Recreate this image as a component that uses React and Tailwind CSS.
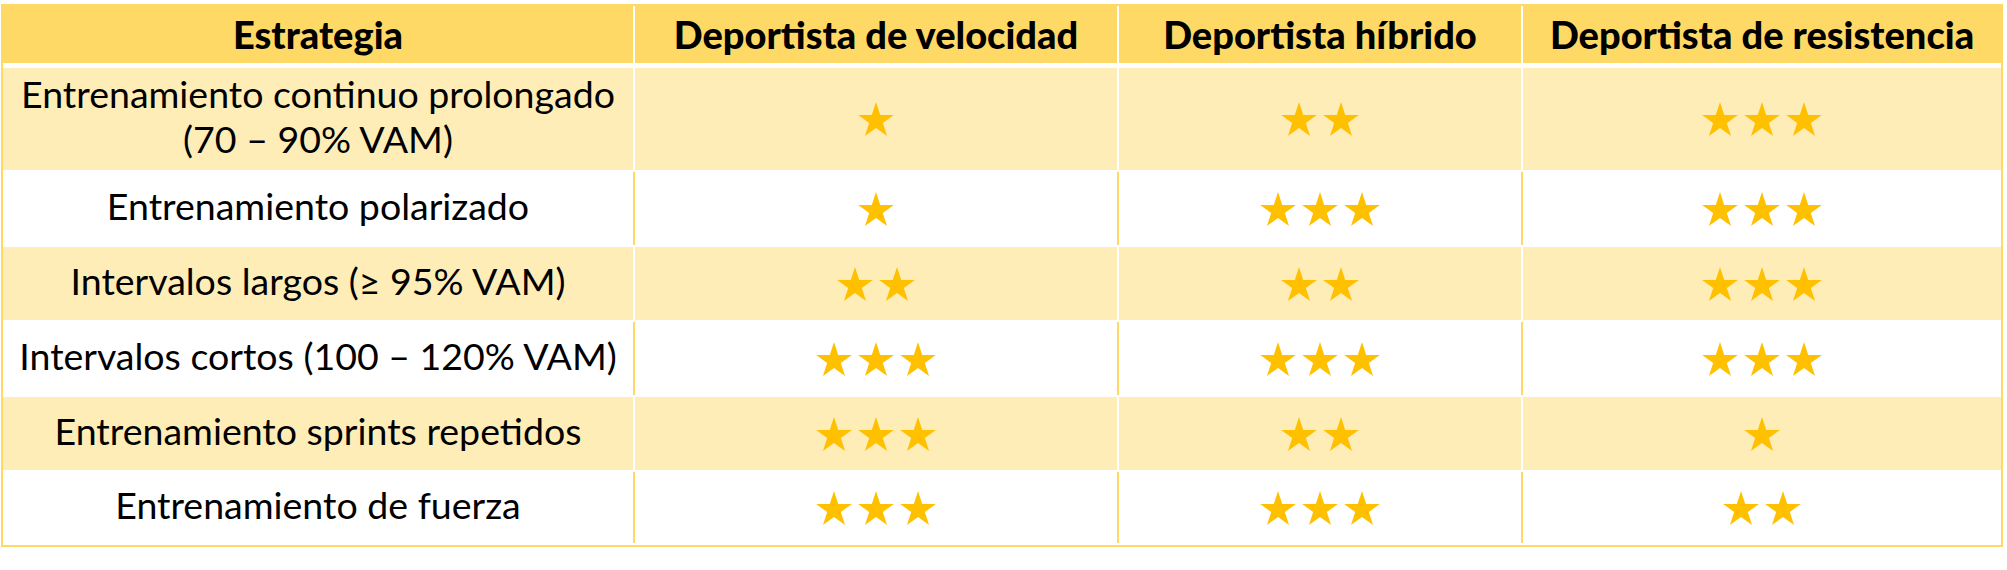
import React from 'react';

const HEADERS = ['Estrategia', 'Deportista de velocidad', 'Deportista híbrido', 'Deportista de resistencia'];

const COLS = ['w-[630px]', 'w-[482px]', 'w-[402px]', 'w-[478px]'];

const ROWS = [
  { label: ['Entrenamiento continuo prolongado', '(70 – 90% VAM)'], stars: [1, 2, 3], h: 'h-[102px]', shaded: true },
  { label: ['Entrenamiento polarizado'], stars: [1, 3, 3], h: 'h-[77px]', shaded: false },
  { label: ['Intervalos largos (≥ 95% VAM)'], stars: [2, 2, 3], h: 'h-[73px]', shaded: true },
  { label: ['Intervalos cortos (100 – 120% VAM)'], stars: [3, 3, 3], h: 'h-[77px]', shaded: false },
  { label: ['Entrenamiento sprints repetidos'], stars: [3, 2, 1], h: 'h-[73px]', shaded: true },
  { label: ['Entrenamiento de fuerza'], stars: [3, 3, 2], h: 'h-[75px]', shaded: false },
];

function Star() {
  return (
    <svg width="36" height="34" viewBox="2.45 0 95.1 90.45" className="shrink-0">
      <polygon
        fill="#ffc000"
        points="50,0 61.23,34.55 97.55,34.55 68.17,55.9 79.39,90.45 50,69.1 20.61,90.45 31.83,55.9 2.45,34.55 38.77,34.55"
      />
    </svg>
  );
}

function Divider({ shaded }) {
  return shaded
    ? <div className="w-[2px] self-stretch bg-white" />
    : <div className="w-[2px] my-[2px] self-stretch bg-[#ffd966]" />;
}

function StarCell({ n, width, shaded }) {
  return (
    <div className={`${width} flex items-center justify-center gap-[6px] ${shaded ? 'bg-[#ffedb8]' : 'bg-white'}`}>
      {Array.from({ length: n }).map((_, i) => <Star key={i} />)}
    </div>
  );
}

export default function App() {
  return (
    <div className="min-h-[570px] bg-white pt-[4px] pl-[1px]" style={{ fontFamily: 'Lato, "Open Sans", sans-serif' }}>
      <div className="w-[2002px] border-2 border-[#ffd966] bg-white">
        {/* Header */}
        <div className="flex h-[57px] bg-[#ffd966]">
          {HEADERS.map((h, i) => (
            <React.Fragment key={h}>
              {i > 0 && <div className="w-[2px] self-stretch bg-white" />}
              <div className={`${COLS[i]} flex items-center justify-center pb-[2px] text-[38px] leading-none font-black text-black`}>
                {h}
              </div>
            </React.Fragment>
          ))}
        </div>

        <div className="h-[5px]" />

        {/* Body */}
        {ROWS.map((row, r) => (
          <div key={r} className={`flex ${row.h} bg-white`}>
            <div className={`${COLS[0]} flex flex-col items-center justify-center pb-[6px] text-[37.5px] leading-[45px] text-black ${row.shaded ? 'bg-[#ffedb8]' : 'bg-white'}`}>
              {row.label.map((l) => <div key={l}>{l}</div>)}
            </div>
            {row.stars.map((n, c) => (
              <React.Fragment key={c}>
                <Divider shaded={row.shaded} />
                <StarCell n={n} width={COLS[c + 1]} shaded={row.shaded} />
              </React.Fragment>
            ))}
          </div>
        ))}
      </div>
    </div>
  );
}
